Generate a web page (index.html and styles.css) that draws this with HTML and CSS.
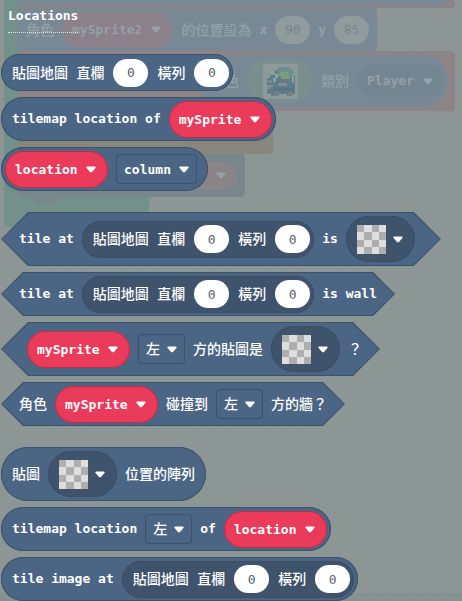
FILE: index.html
```html
<!DOCTYPE html>
<html lang="zh-Hant">
<head>
<meta charset="utf-8">
<title>Locations</title>
<link rel="stylesheet" href="styles.css">
</head>
<body>
<svg class="defs" width="0" height="0" aria-hidden="true">
  <symbol id="caret" viewBox="0 0 10 7"><path d="M1.300.4h7.4c1.1 0 1.300 1 .7 1.600L6 5.900c-.6.6-1.400.6-2 0L.6 2C0 1.400.2.4 1.300.4z" fill="currentColor"/></symbol>
  <symbol id="tile" viewBox="0 0 4 4"><path fill="#dedede" d="M0 0h4v4H0z"/><path fill="#aeaeae" shape-rendering="crispEdges" d="M0 0h1v1H0zM2 0h1v1H2zM1 1h1v1H1zM3 1h1v1H3zM0 2h1v1H0zM2 2h1v1H2zM1 3h1v1H1zM3 3h1v1H3z"/></symbol>
</svg>

<div class="workspace" aria-hidden="true">
  <div class="loop">
    <div class="bg-row bg-top"><div class="bg-strip"></div></div>
    <div class="bg-row bg-position">
      <span class="zh">角色</span>
      <span class="bg-var">mySprite2 <svg class="caret"><use href="#caret"/></svg></span>
      <span class="zh">的位置設為</span><span>x</span><span class="bg-num">90</span><span>y</span><span class="bg-num">85</span>
    </div>
    <div class="bg-row bg-set">
      <div class="bg-create">
        <span class="zh">角色</span>
        <span class="bg-image">
          <svg class="car" viewBox="0 0 35 35">
            <rect width="35" height="35" rx="2" fill="#8c9a99"/>
            <path d="M15 4h12v2h3v5h2v19h-4v2h-4v-2H12v2H8v-2H4V14h3v-3h5V6h3z" fill="#5f7c8a"/>
            <path d="M16 3h10v2h3v4h2v6h-3v-4h-3V8h-8v3h-3V6h2z" fill="#6c9290"/>
            <path d="M17 8h8v3h2v4h-9v-3h-3v-2h2z" fill="#7e9d7e"/>
            <path d="M12 10h3v4h-2v4h-3v-4h2zM29 10h2v9h-2z" fill="#83a3a3"/>
            <path d="M5 16h4v3H5z" fill="#6c9290"/>
            <path d="M4 21h6v2H7v2H4zM15 19h9v3h-9z" fill="#8c8990"/>
            <path d="M10 24h20v3H10z" fill="#587483"/>
            <path d="M11 27h5v5h-5zM25 27h4v5h-4z" fill="#747f80"/>
          </svg>
        </span>
        <span class="zh">類別</span>
        <span class="bg-kind">Player <svg class="caret"><use href="#caret"/></svg></span>
      </div>
    </div>
    <div class="bg-row bg-brown"></div>
    <div class="bg-row bg-last"><span class="bg-var">mySprite <svg class="caret"><use href="#caret"/></svg></span></div>
    <div class="notch"></div>
  </div>
  <div class="bottom-bar"></div>
</div>

<main class="flyout">
  <h1>Locations</h1>

  <div class="group">
    <div class="block loc">
      <span class="zh">貼圖地圖 直欄</span><input class="num" aria-label="直欄" value="0">
      <span class="zh">橫列</span><input class="num" aria-label="橫列" value="0">
    </div>
    <div class="block end-pill">
      <span>tilemap location of</span>
      <label class="drop var"><select aria-label="sprite"><option>mySprite</option></select><svg class="caret"><use href="#caret"/></svg></label>
    </div>
    <div class="block start-pill">
      <label class="drop var"><select aria-label="location"><option>location</option></select><svg class="caret"><use href="#caret"/></svg></label>
      <label class="drop field wide"><select aria-label="axis"><option>column</option></select><svg class="caret"><use href="#caret"/></svg></label>
    </div>
  </div>

  <div class="group">
    <div class="block hex tall end-tile">
      <span>tile at</span>
      <div class="loc inner">
        <span class="zh">貼圖地圖 直欄</span><input class="num" aria-label="直欄" value="0">
        <span class="zh">橫列</span><input class="num" aria-label="橫列" value="0">
      </div>
      <span>is</span>
      <button class="picker" aria-label="tile"><svg class="tile"><use href="#tile"/></svg><svg class="caret"><use href="#caret"/></svg></button>
    </div>
    <div class="block hex">
      <span>tile at</span>
      <div class="loc inner">
        <span class="zh">貼圖地圖 直欄</span><input class="num" aria-label="直欄" value="0">
        <span class="zh">橫列</span><input class="num" aria-label="橫列" value="0">
      </div>
      <span>is wall</span>
    </div>
    <div class="block hex tall start-var">
      <label class="drop var"><select aria-label="sprite"><option>mySprite</option></select><svg class="caret"><use href="#caret"/></svg></label>
      <label class="drop field"><select class="zh" aria-label="direction"><option>左</option></select><svg class="caret"><use href="#caret"/></svg></label>
      <span class="zh">方的貼圖是</span>
      <button class="picker" aria-label="tile"><svg class="tile"><use href="#tile"/></svg><svg class="caret"><use href="#caret"/></svg></button>
      <span class="zh">？</span>
    </div>
    <div class="block hex">
      <span class="zh">角色</span>
      <label class="drop var"><select aria-label="sprite"><option>mySprite</option></select><svg class="caret"><use href="#caret"/></svg></label>
      <span class="zh">碰撞到</span>
      <label class="drop field"><select class="zh" aria-label="direction"><option>左</option></select><svg class="caret"><use href="#caret"/></svg></label>
      <span class="zh">方的牆？</span>
    </div>
  </div>

  <div class="group">
    <div class="block tall">
      <span class="zh">貼圖</span>
      <button class="picker" aria-label="tile"><svg class="tile"><use href="#tile"/></svg><svg class="caret"><use href="#caret"/></svg></button>
      <span class="zh">位置的陣列</span>
    </div>
    <div class="block end-pill">
      <span>tilemap location</span>
      <label class="drop field"><select class="zh" aria-label="direction"><option>左</option></select><svg class="caret"><use href="#caret"/></svg></label>
      <span>of</span>
      <label class="drop var"><select aria-label="location"><option>location</option></select><svg class="caret"><use href="#caret"/></svg></label>
    </div>
    <div class="block end-pill">
      <span>tile image at</span>
      <div class="loc inner">
        <span class="zh">貼圖地圖 直欄</span><input class="num" aria-label="直欄" value="0">
        <span class="zh">橫列</span><input class="num" aria-label="橫列" value="0">
      </div>
    </div>
  </div>
</main>
</body>
</html>
```

FILE: styles.css
```css
* { box-sizing: border-box; }

:root {
  --fill: #4b6584;
  --edge: #3c516a;
  --inner: #40536c;
  --mono: "DejaVu Sans Mono", "Noto Sans CJK TC", monospace;
}

body {
  margin: 0;
  min-height: 100vh;
  position: relative;
  overflow: hidden;
  background: #8c9694;
  color: #fff;
  font: bold 13px/20px var(--mono);
}

.defs { position: absolute; }
.zh { font-size: 14px; font-weight: 500; }
span { white-space: nowrap; }
.caret { width: 10px; height: 7px; flex: none; }

/* Dimmed workspace behind the flyout */
.workspace {
  position: absolute;
  inset: 0;
  overflow: hidden;
  color: #94a1a6;
  background-image:
    linear-gradient(90deg, #8a9492 1px, transparent 1px),
    linear-gradient(#8a9492 1px, transparent 1px);
  background-size: 18px 18px;
  background-position: 13px 3px;
}

.loop {
  width: 145px;
  height: 227px;
  margin-left: 4px;
  padding-left: 14px;
  background: #73918a;
  border-radius: 0 0 4px 4px;
}

.bg-row { display: flex; align-items: center; gap: 8px; border-radius: 0 4px 4px 0; }
.bg-top { width: 437px; height: 8px; background: #8c8486; align-items: start; }
.bg-strip { width: 429px; height: 5px; background: #788995; border-radius: 0 0 20px 0; }
.bg-position { width: 359px; height: 43px; padding-left: 8px; background: #788995; }
.bg-var {
  display: flex; align-items: center; gap: 9px;
  height: 36px; padding: 0 12px 0 10px;
  background: #8a8288; border-radius: 18px;
}
.bg-num {
  width: 35px; height: 28px; line-height: 28px; text-align: center;
  background: #8f9b9d; border-radius: 14px; color: #798589; font-weight: 500;
}
.bg-set { width: 437px; height: 60px; background: #8c8486; padding-right: 7px; justify-content: end; }
.bg-create {
  display: flex; align-items: center; gap: 8px;
  width: 248px; height: 52px; padding-right: 3px; justify-content: end;
  background: #788995; border-radius: 26px;
}
.bg-image {
  display: grid; place-items: center; width: 66px; height: 44px;
  background: #7b8e8e; border-radius: 22px;
}
.car { width: 35px; height: 35px; }
.bg-kind {
  display: flex; align-items: center; gap: 9px;
  height: 32px; padding: 0 12px 0 10px;
  background: #748592; border-radius: 16px;
}
.bg-brown { width: 255px; height: 43px; background: #89857f; }
.bg-last { width: 227px; height: 43px; padding-right: 7px; background: #77878c; justify-content: end; }
.bg-last .bg-var { height: 28px; background: #8a8387; }
.notch { width: 28px; height: 7px; margin-left: 14px; background: #77878c; clip-path: polygon(0 0, 100% 0, 78% 100%, 22% 100%); }
.bottom-bar { position: absolute; inset: auto 0 0 0; height: 8px; background: #869290; }

/* Flyout */
.flyout { position: relative; padding: 6px 0 0 1px; }

h1 {
  width: max-content;
  margin: 0 0 0 7px;
  padding-bottom: 6px;
  border-bottom: 1px dotted #dfe4e3;
  font: bold 13px/20px var(--mono);
}

.group { display: flex; flex-direction: column; align-items: start; gap: 6px; margin-top: 21px; }

.block {
  display: flex; align-items: center; gap: 8px;
  height: 44px; padding: 0 11px;
  background: var(--fill);
  border-radius: 27px;
  box-shadow: inset 0 0 0 1px var(--edge);
}
.tall { height: 54px; }
.end-pill { padding-right: 4px; }
.start-pill { padding-left: 4px; }

.loc { display: flex; align-items: center; gap: 9px; height: 37px; padding: 0 4px 0 11px; }
.inner { background: var(--inner); border-radius: 19px; box-shadow: inset 0 0 0 1px #3b4e66; }

.hex {
  --point: 22px;
  position: relative; isolation: isolate;
  padding: 0 18px;
  background: none; box-shadow: none;
}
.hex.tall { --point: 27px; }
.hex.end-tile { padding-right: 26px; }
.hex.start-var { padding-left: 26px; }
.hex::before, .hex::after {
  content: ""; position: absolute; inset: 0; z-index: -1;
  background: var(--edge);
  clip-path: polygon(var(--point) 0, calc(100% - var(--point)) 0, 100% 50%, calc(100% - var(--point)) 100%, var(--point) 100%, 0 50%);
}
.hex::after { inset: 1px; background: var(--fill); }

.num {
  width: 35px; height: 28px; padding: 0;
  border: 0; border-radius: 14px;
  background: #fff; color: #575e75;
  font: 13px var(--mono); text-align: center;
}

.drop { display: grid; align-items: center; flex: none; }
.drop select, .drop .caret { grid-area: 1 / 1; }
.drop .caret { justify-self: end; margin-right: 12px; pointer-events: none; }
.drop select {
  appearance: none; width: 100%; height: 100%; margin: 0;
  padding: 0 20px 0 10px; border: 0; background: none; color: #fff;
  font-family: var(--mono); font-size: 13px; font-weight: bold;
}
.drop select.zh { font-size: 14px; font-weight: 500; padding-left: 8px; }
.var { width: 103px; height: 37px; background: #eb3b5a; border-radius: 19px; box-shadow: inset 0 0 0 1px #bc2f48; }
.field { width: 47px; height: 30px; border-radius: 4px; box-shadow: inset 0 0 0 1px var(--edge); }
.field.wide { width: 81px; }
.field .caret { margin-right: 8px; }
.field.wide select { padding-left: 8px; }

.picker {
  display: flex; align-items: center; gap: 7px; flex: none;
  width: 69px; height: 46px; padding: 0 0 0 11px;
  border: 0; border-radius: 23px;
  background: var(--inner); color: #fff;
  box-shadow: inset 0 0 0 1px #3b4e66;
}
.tile { width: 29px; height: 29px; flex: none; }
```
